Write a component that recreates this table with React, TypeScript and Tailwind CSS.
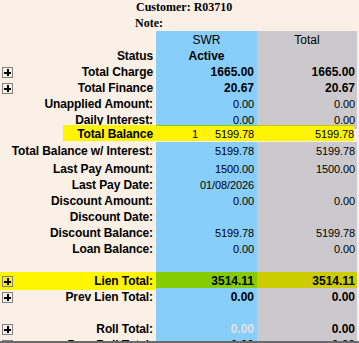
import React from "react";

type RowData = {
  label: string;
  plus?: boolean;
  swr?: string;
  total?: string;
  bold?: boolean;
  swrClass?: string;
  h?: string;
};

const PlusBox = () => (
  <span className="flex h-[11px] w-[11px] shrink-0 items-center justify-center border border-[#808080]">
    <svg width="9" height="9" viewBox="0 0 9 9" shapeRendering="crispEdges">
      <rect x="1" y="4" width="7" height="2" fill="#000" />
      <rect x="4" y="1" width="2" height="7" fill="#000" />
    </svg>
  </span>
);

const labelFont = "font-['Liberation_Sans',Arial,sans-serif] text-[12px] font-bold tracking-[-0.1px] text-black";
const numFont = "font-['Liberation_Sans',Arial,sans-serif] text-[11px] tracking-[-0.1px] text-black";
const boldNum = "font-['Liberation_Sans',Arial,sans-serif] text-[12px] font-bold text-black";

const Row = ({ label, plus, swr, total, bold, swrClass, h = "h-[16px]" }: RowData) => (
  <div className={`grid ${h} grid-cols-[156px_101px_100px]`}>
    <div className="flex items-center pl-[2px] pr-[3px]">
      {plus && <PlusBox />}
      <span className={`ml-auto whitespace-nowrap ${labelFont}`}>{label}</span>
    </div>
    <div className={`flex items-center justify-end bg-[#87cefa] pr-[3px] ${bold ? boldNum : numFont} ${swrClass ?? ""}`}>
      {swr}
    </div>
    <div className={`flex items-center justify-end bg-[#cbc9cd] pr-[2px] ${bold ? boldNum : numFont}`}>
      {total}
    </div>
  </div>
);

const Blank = () => <Row label="" />;

export default function App() {
  return (
    <div className="flex h-[343px] w-[359px] flex-col overflow-hidden bg-[#faf0e6]">
      <div className="h-[341px] overflow-hidden">
        <div className="h-[15px] pl-[136px] font-['Liberation_Serif','Times_New_Roman',serif] text-[12px] font-bold leading-[15px] text-black">
          Customer: R03710
        </div>
        <div className="h-[16px] pl-[135px] font-['Liberation_Serif','Times_New_Roman',serif] text-[12px] font-bold leading-[17px] text-black">
          Note:
        </div>

        <div className="grid h-[16px] grid-cols-[156px_101px_100px] font-['Liberation_Sans',Arial,sans-serif] text-[12px] text-black">
          <div />
          <div className="flex items-center justify-center bg-[#87cefa]">SWR</div>
          <div className="flex items-center justify-center bg-[#cbc9cd]">Total</div>
        </div>

        <div className="grid h-[16px] grid-cols-[156px_101px_100px]">
          <div className="flex items-center justify-end pr-[3px]">
            <span className={labelFont}>Status</span>
          </div>
          <div className={`flex items-center justify-center bg-[#87cefa] ${boldNum}`}>Active</div>
          <div className="bg-[#cbc9cd]" />
        </div>

        <Row label="Total Charge" plus bold swr="1665.00" total="1665.00" />
        <Row label="Total Finance" plus bold swr="20.67" total="20.67" />
        <Row label="Unapplied Amount:" swr="0.00" total="0.00" />
        <Row label="Daily Interest:" swr="0.00" total="0.00" h="h-[14px]" />

        <div className="flex h-[16px]">
          <div className="w-[63px]" />
          <div className="flex w-[291px] bg-[#fff500]">
            <div className="flex w-[93px] items-center justify-end pr-[3px] pt-[2px]">
              <span className={labelFont}>Total Balance</span>
            </div>
            <div className={`flex w-[101px] items-center justify-end gap-[17px] border-t border-[#80cc20] pr-[3px] pt-[1px] ${numFont}`}>
              <span>1</span>
              <span>5199.78</span>
            </div>
            <div className={`flex w-[97px] items-center justify-end border-t border-[#cbc400] pt-[1px] ${numFont}`}>
              5199.78
            </div>
          </div>
        </div>
        <div className="h-[1px]" />

        <Row label="Total Balance w/ Interest:" swr="5199.78" total="5199.78" h="h-[18px]" />
        <Row label="Last Pay Amount:" swr="1500.00" total="1500.00" />
        <Row label="Last Pay Date:" swr="01/08/2026" total="" />
        <Row label="Discount Amount:" swr="0.00" total="0.00" />
        <Row label="Discount Date:" swr="" total="" />
        <Row label="Discount Balance:" swr="5199.78" total="5199.78" />
        <Row label="Loan Balance:" swr="0.00" total="0.00" />
        <Blank />

        <div className="grid h-[16px] grid-cols-[156px_101px_100px]">
          <div className="flex items-center bg-[#fff500] pl-[2px] pr-[3px]">
            <PlusBox />
            <span className={`ml-auto ${labelFont}`}>Lien Total:</span>
          </div>
          <div className={`flex items-center justify-end bg-[#84cc00] pr-[3px] ${boldNum}`}>3514.11</div>
          <div className={`flex items-center justify-end bg-[#cccc00] pr-[2px] ${boldNum}`}>3514.11</div>
        </div>

        <Row label="Prev Lien Total:" plus bold swr="0.00" total="0.00" />
        <Blank />
        <Row label="Roll Total:" plus bold swr="0.00" total="0.00" swrClass="!text-[#e2e2e2]" />
        <Row label="Prev Roll Total:" plus bold swr="0.00" total="0.00" />
      </div>
      <div className="h-[2px] bg-[#6b6b6b]" />
    </div>
  );
}
